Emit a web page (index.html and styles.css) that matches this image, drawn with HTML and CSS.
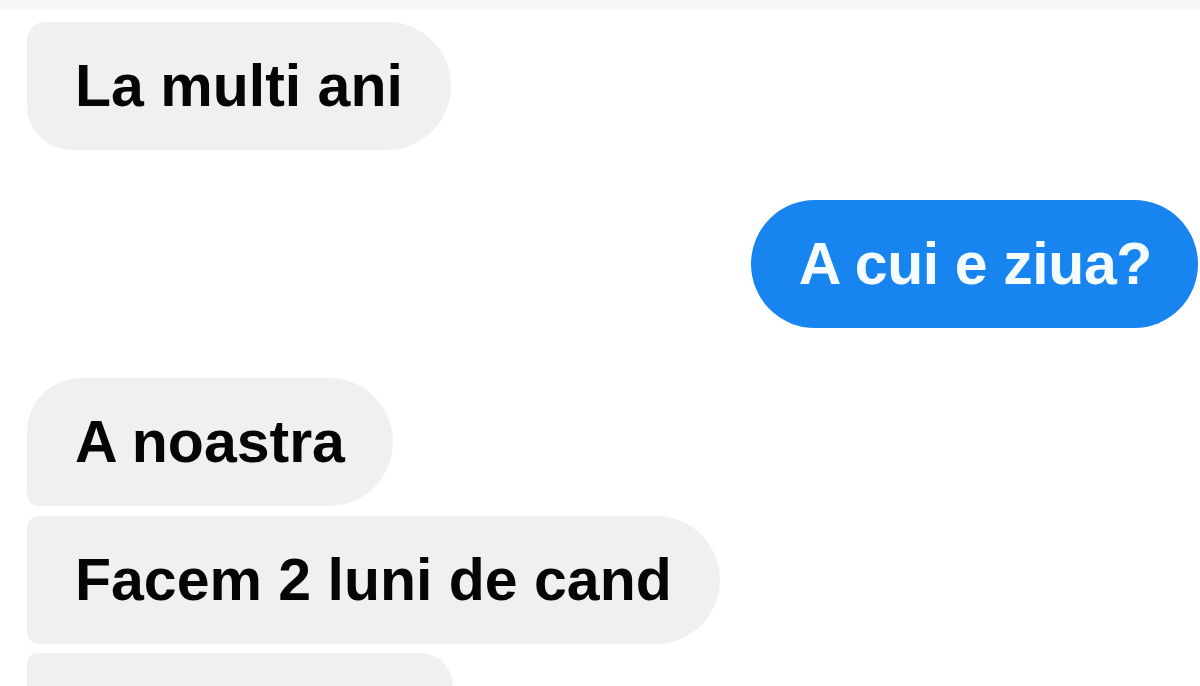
FILE: index.html
```html
<!DOCTYPE html>
<html lang="ro">
<head>
<meta charset="utf-8">
<title>Chat</title>
<link rel="stylesheet" href="styles.css">
</head>
<body>
<div class="topband"></div>
<main class="chat">
  <div class="msg in single">La multi ani</div>
  <div class="msg out">A cui e ziua?</div>
  <div class="msg in first">A noastra</div>
  <div class="msg in middle">Facem 2 luni de cand</div>
  <div class="msg in middle cut"></div>
</main>
</body>
</html>
```
FILE: styles.css
```css
html, body {
  margin: 0;
  padding: 0;
  background: #ffffff;
}
body {
  width: 1200px;
  height: 686px;
  overflow: hidden;
  position: relative;
  font-family: "Liberation Sans", Arial, sans-serif;
}
.topband {
  position: absolute;
  top: 0;
  left: 0;
  right: 0;
  height: 9px;
  background: #f8f8f8;
}
.chat {
  display: flex;
  flex-direction: column;
  align-items: flex-start;
  padding: 22px 2px 0 27px;
}
.msg {
  font-size: 59px;
  font-weight: 700;
  line-height: 68px;
  padding: 30px 48px;
  white-space: nowrap;
  color: #050505;
  background: #f0f0f0;
  border-radius: 64px;
}
.in.single {
  border-radius: 18px 64px 64px 44px;
}
.out {
  align-self: flex-end;
  margin-top: 50px;
  padding-left: 48px;
  padding-right: 46px;
  letter-spacing: -0.4px;
  background: #1784ef;
  color: #f4fcff;
}
.in.first {
  margin-top: 50px;
  border-radius: 54px 64px 64px 12px;
}
.in.middle {
  margin-top: 10px;
  border-radius: 12px 64px 64px 12px;
}
.in.cut {
  width: 426px;
  height: 33px;
  padding: 0;
  margin-top: 9px;
  border-radius: 12px 40px 0 0;
}
```
